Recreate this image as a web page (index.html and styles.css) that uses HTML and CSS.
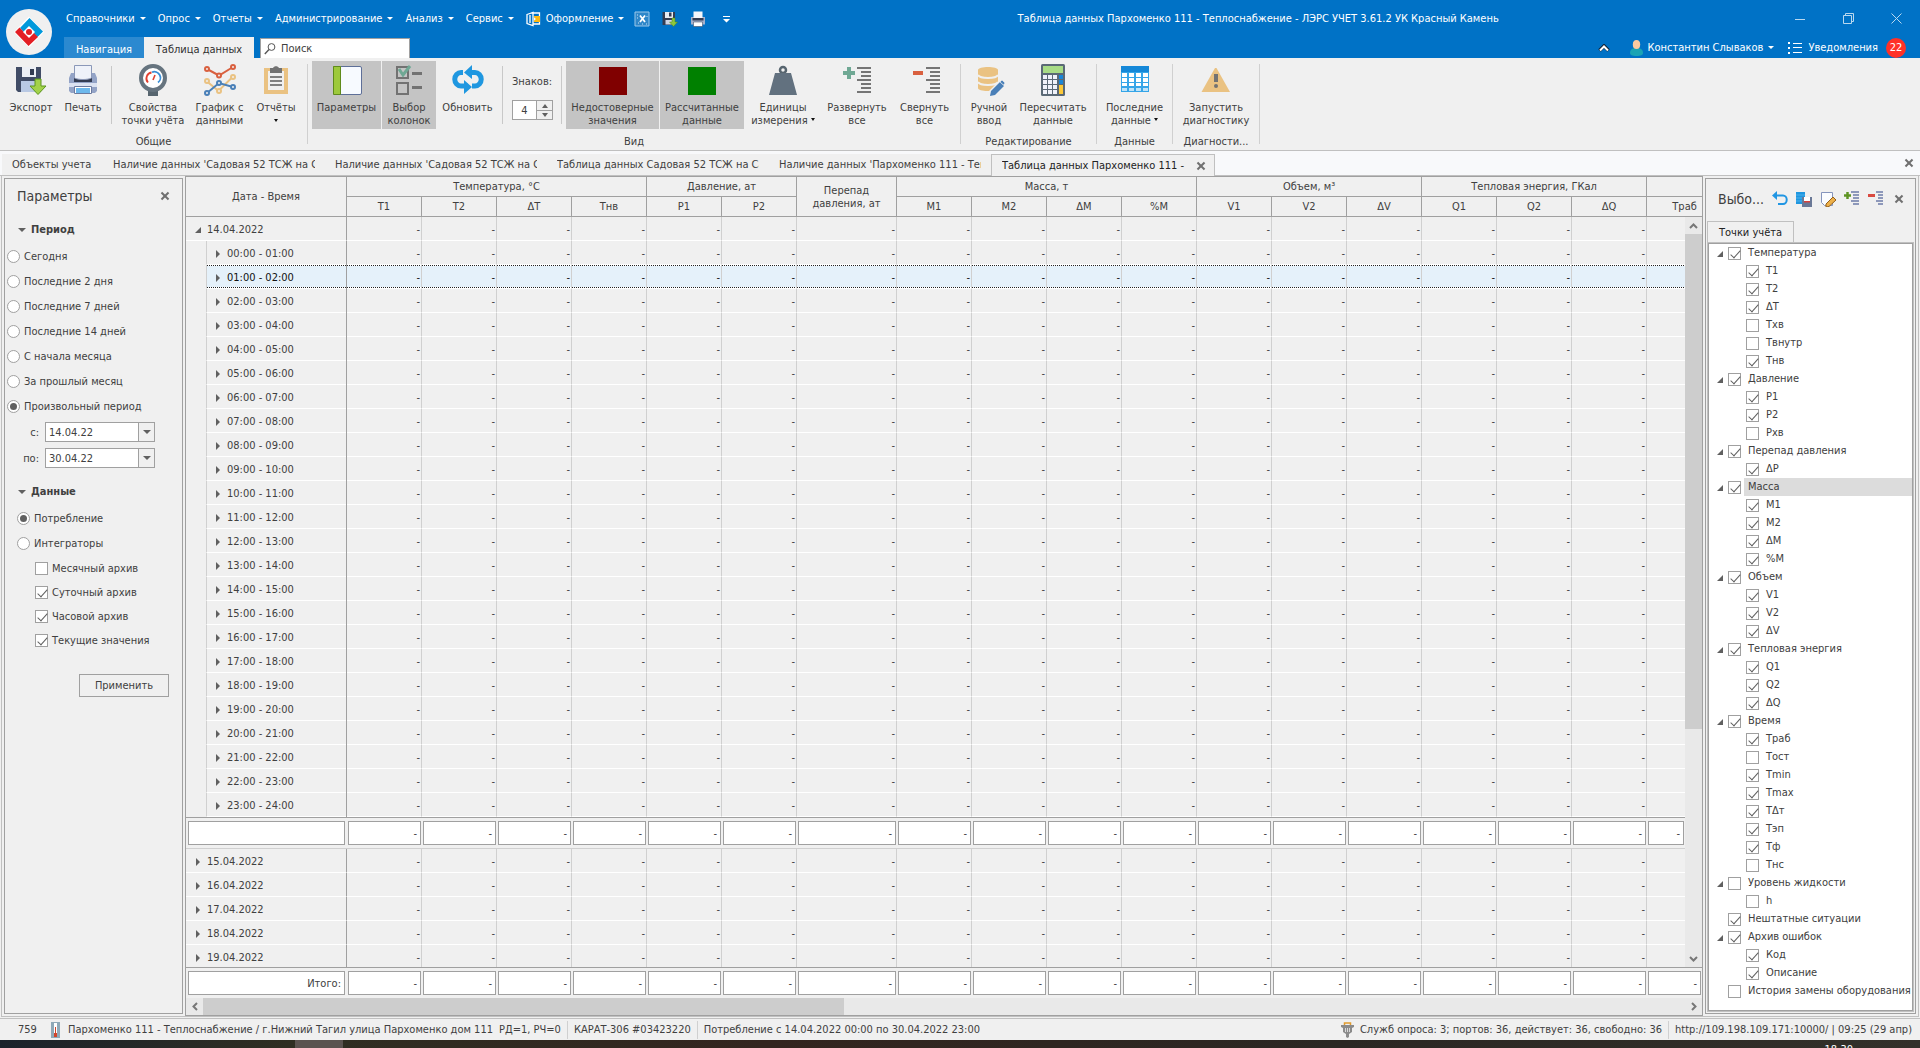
FILE: index.html
```html
<!DOCTYPE html>
<html lang="ru">
<head>
<meta charset="utf-8">
<title>Таблица данных Пархоменко 111 - Теплоснабжение</title>
<link rel="stylesheet" href="styles.css">
</head>
<body>
<header class="top">
  <a class="logo" href="#" aria-label="ЛЭРС УЧЕТ">
    <svg width="46" height="46" viewBox="0 0 46 46"><circle cx="23" cy="23" r="23" fill="#f0f0f0"/><path d="M23 7.500 38 23 23 38.500 8 23z" fill="#fff"/><path d="M23.500 9 37 22.500 31.500 28 23.500 20 19 24.500 14 19z" fill="#0099db"/><path d="M13.500 18.500 19 24 23 28 27.500 23.500 32 28 22.500 37 9 23z" fill="#e31e24"/><path d="M23 17 29 23 23 29 17 23z" fill="#fff"/><circle cx="23" cy="23" r="3" fill="#e31e24"/></svg>
  </a>
  <div class="titlebar">
    <nav class="menu">
      <button class="drop">Справочники</button><button class="drop">Опрос</button><button class="drop">Отчеты</button><button class="drop">Администрирование</button><button class="drop">Анализ</button><button class="drop">Сервис</button>
      <button class="drop theme"><svg width="16" height="16" viewBox="0 0 16 16" fill="none"><path d="M1 3.500 7 1.500v13L1 12.500zM7 2h6.500v11H7M4 4v8" stroke="#fff" stroke-width="1.300"/><path d="M8 5h6v6H8z" fill="#fdb913"/><path d="M8 6.500 10 8 8 9.500z" fill="#fff"/></svg>Оформление</button>
      <button class="quick" aria-label="Очистить"><svg width="16" height="16" viewBox="0 0 16 16" fill="none"><path d="M1 1h14v14H1z" stroke="#9cc8ea" fill="#2f87c9"/><path d="M6 4.500 11 11M11 4.500 6 11" stroke="#fff" stroke-width="1.800"/><path d="M3 4h1M3 7h1M4 12h1M8 13h1M12 13h1M13 5v1" stroke="#cde4f5"/></svg></button>
      <button class="quick" aria-label="Экспорт"><svg width="16" height="16" viewBox="0 0 32 32"><path d="M1 2h25v26H1z" fill="#333c52"/><path d="M6 2h16v12H6z" fill="#e8ebf2"/><path d="M14 3h5v8h-5z" fill="#333c52"/><path d="M7 18h14v9H7z" fill="#cdd5e6"/><path d="M20 14h6v8h5l-8 9-8-9h5z" fill="#8cc63f" stroke="#4d8a16"/></svg></button>
      <button class="quick" aria-label="Печать"><svg width="16" height="16" viewBox="0 0 32 32"><path d="M2 12h28v15H2z" fill="#a4b0cc"/><path d="M7 1h18v13H7z" fill="#f4f6fb"/><path d="M5 14h22v5H5z" fill="#333c52"/><path d="M7 22h18v9H7z" fill="#fff" stroke="#333c52"/></svg></button>
      <button class="quick" aria-label="Настройка панели"><svg width="7" height="8" viewBox="0 0 7 8" fill="#fff"><path d="M0 1h7v1H0zM0 4h7L3.500 7.500z"/></svg></button>
    </nav>
    <h1 class="wintitle">Таблица данных Пархоменко 111 - Теплоснабжение - ЛЭРС УЧЕТ 3.61.2 УК Красный Камень</h1>
    <div class="wincontrols">
      <button aria-label="Свернуть"><svg width="10" height="10"><path d="M0 5.500h10" stroke="#b9d8ef"/></svg></button>
      <button aria-label="Восстановить"><svg width="11" height="11" fill="none" stroke="#b9d8ef"><path d="M.5 2.500h8v8h-8zM2.500 2.500v-2h8v8h-2"/></svg></button>
      <button aria-label="Закрыть"><svg width="11" height="11" stroke="#b9d8ef"><path d="M.5.5l10 10M10.500.5l-10 10"/></svg></button>
    </div>
  </div>
  <div class="tabrow">
    <button class="rtab nav">Навигация</button><button class="rtab active">Таблица данных</button>
    <label class="search"><svg width="12" height="12" viewBox="0 0 12 12" fill="none" stroke="#555"><circle cx="7.500" cy="4" r="3.400"/><path d="M5 6.500.8 11" stroke-width="1.400"/></svg><input type="text" value="Поиск" aria-label="Поиск"></label>
    <div class="user">
      <button class="fold" aria-label="Свернуть ленту"><svg width="12" height="8" viewBox="0 0 12 8" fill="none"><path d="M1.500 6.500 6 2l4.500 4.500" stroke="#123" stroke-width="3.500"/><path d="M2 6.500 6 2.500l4 4" stroke="#fff" stroke-width="2"/></svg></button>
      <button class="drop who"><svg width="13" height="16" viewBox="0 0 13 16"><path d="M0 13c0-4 3-5 6.500-5s6.500 1 6.500 5c0 2-2 3-6.500 3S0 15 0 13z" fill="#1ba4b4"/><ellipse cx="6.500" cy="4.500" rx="3.700" ry="4.500" fill="#fcc9a0"/></svg>Константин Слываков</button>
      <button class="notes"><svg width="14" height="12" viewBox="0 0 14 12" fill="#fff"><path d="M0 0h2v2H0zM0 5h2v2H0zM0 10h2v2H0zM5 1h9v1H5zM5 5h9v1H5zM5 10h9v1H5z"/></svg>Уведомления<span class="badge">22</span></button>
    </div>
  </div>
</header>

<section class="ribbon">
  <div class="group">
    <div class="tools">
      <button class="tool w54"><svg width="32" height="32" viewBox="0 0 32 32"><path d="M1 3h25v25H3l-2-2z" fill="#414c66"/><path d="M7 3h14v10H7z" fill="#eceff5"/><path d="M15 5h4v6h-4z" fill="#333c52"/><path d="M6 17h16v11H6z" fill="#b9c9e4"/><path d="M20 15h6v7h5l-8 8.500L15 22h5z" fill="#a3d24a" stroke="#5c961f"/></svg>Экспорт</button>
      <button class="tool w48"><svg width="32" height="32" viewBox="0 0 32 32"><path d="M4 9h24l2 5v13l-2 2H4l-2-2V14z" fill="#93a3c6"/><path d="M7 14h18v4H7z" fill="#333c52"/><path d="M7.500 1.500h17V14c-4 2-13 2-17 0z" fill="#eff2f9" stroke="#8b98b8"/><path d="M2 19h28v4H2z" fill="#dbe2f1"/><path d="M7.500 22.500h17v7h-17z" fill="#fff" stroke="#6c7a9e"/><path d="M9 24h14v5H9z" fill="#6cb8ec"/></svg>Печать</button>
      <i class="sep"></i>
      <button class="tool w74"><svg width="32" height="32" viewBox="0 0 32 32"><path d="M11 24h10v8H11z" fill="#57656f"/><circle cx="16" cy="14" r="12" fill="#fff" stroke="#66747f" stroke-width="4"/><path d="M11 18.500a6 6 0 0 1 3.500-10" fill="none" stroke="#e2402f" stroke-width="1.800"/><path d="M15 8.200a6 6 0 0 1 6 10.300" fill="none" stroke="#3b8fd6" stroke-width="1.800"/><path d="M18 11l-2 5" stroke="#e2402f" stroke-width="1.600"/></svg><span>Свойства<br>точки учёта</span></button>
      <button class="tool w57"><svg width="34" height="32" viewBox="0 0 34 32" fill="none" stroke-width="2"><g stroke="#eac282"><path d="M4 17.500 15.500 27 29.500 13"/><circle cx="4" cy="17" r="2" fill="#f0f0f0"/><circle cx="16" cy="27" r="2" fill="#f0f0f0"/><circle cx="30" cy="13" r="2" fill="#f0f0f0"/></g><g stroke="#d9603f"><path d="M4 5l12 6.500L30 3"/><circle cx="4" cy="5" r="2" fill="#f0f0f0"/><circle cx="16" cy="11.500" r="2" fill="#f0f0f0"/><circle cx="30" cy="3" r="2" fill="#f0f0f0"/></g><g stroke="#4a80b8"><path d="M4 29l12-10 14 4"/><circle cx="4" cy="29" r="2" fill="#f0f0f0"/><circle cx="16" cy="19" r="2" fill="#f0f0f0"/><circle cx="30" cy="23" r="2" fill="#f0f0f0"/></g></svg><span>График с<br>данными</span></button>
      <button class="tool w54"><svg width="32" height="32" viewBox="0 0 32 32"><path d="M4 4h24v26H4z" fill="#eac282"/><path d="M8 7h16v19H8z" fill="#f0f0f0"/><path d="M10 4h3c1-2.500 5-2.500 6 0h3v5H10z" fill="#727272"/><path d="M10 12h12v2H10zM10 16h12v2H10zM10 20h12v2H10z" fill="#808080"/></svg>Отчёты<span class="caret"></span></button>
    </div>
    <div class="gname">Общие</div>
  </div>
  <div class="group">
    <div class="tools">
      <button class="tool on w69"><svg width="32" height="32" viewBox="0 0 32 32"><rect x="2.500" y="2.500" width="28" height="28" rx="1.500" fill="#f7faff" stroke="#5e6f98"/><path d="M2 2h8v28H2z" fill="#9dc93c"/><path d="M2.500 2.500h7v28h-7z" fill="none" stroke="#5f8a1c"/></svg>Параметры</button>
      <button class="tool on w54"><svg width="32" height="32" viewBox="0 0 32 32"><path d="M4 3h11v11H4zM4 19h11v11H4z" fill="none" stroke="#727272" stroke-width="2"/><path d="M6 5l4 6 7-9" fill="none" stroke="#6fa894" stroke-width="3"/><path d="M19 8h10v3H19zM19 22h10v3H19z" fill="#727272"/></svg><span>Выбор<br>колонок</span></button>
      <button class="tool w61"><svg width="34" height="32" viewBox="0 0 34 32" fill="none" stroke="#1f97e0" stroke-width="5"><path d="M12 8.500H10A6 6.500 0 0 0 10 22h7"/><path d="M21 22h3a6 6.500 0 0 0 0-13.500h-8"/><path d="M21 1v14l-8-6.500zM13 16v14l8-7z" fill="#1f97e0" stroke="none"/></svg>Обновить</button>
      <i class="sep"></i>
      <div class="digits"><label for="digits">Знаков:</label><span class="spin"><input id="digits" type="text" value="4"><span class="updown"><button aria-label="Больше"><i class="tri up"></i></button><button aria-label="Меньше"><i class="tri down"></i></button></span></span></div>
      <i class="sep"></i>
      <button class="tool on w93"><svg width="32" height="32"><path d="M2 3h28v28H2z" fill="#800000"/></svg><span>Недостоверные<br>значения</span></button>
      <button class="tool on w84"><svg width="32" height="32"><path d="M2 3h28v28H2z" fill="#008000"/></svg><span>Рассчитанные<br>данные</span></button>
      <button class="tool w76"><svg width="32" height="32" viewBox="0 0 32 32"><circle cx="16" cy="6" r="3" fill="none" stroke="#57656f" stroke-width="2.500"/><path d="M8 9h16l6 22H2z" fill="#62717f"/></svg><span>Единицы<br>измерения <i class="caret side"></i></span></button>
      <button class="tool w70"><svg width="32" height="32" viewBox="0 0 32 32"><path d="M6 3h4v4h4v4h-4v4H6v-4H2V7h4z" fill="#6fa894"/><path d="M16 3h14v2H16zM20 7h10v2H20zM20 11h10v2H20zM16 15h14v2H16zM20 19h10v2H20zM20 23h10v2H20zM16 27h14v2H16z" fill="#757575"/></svg><span>Развернуть<br>все</span></button>
      <button class="tool w63"><svg width="32" height="32" viewBox="0 0 32 32"><path d="M4 7h10v4H4z" fill="#d9603f"/><path d="M17 3h14v2H17zM21 7h10v2H21zM21 11h10v2H21zM17 15h14v2H17zM21 19h10v2H21zM21 23h10v2H21zM17 27h14v2H17z" fill="#757575"/></svg><span>Свернуть<br>все</span></button>
    </div>
    <div class="gname">Вид</div>
  </div>
  <div class="group">
    <div class="tools">
      <button class="tool w48"><svg width="32" height="32" viewBox="0 0 32 32"><path d="M5 6c0-4 20-4 20 0v18c-2 4-20 4-20 0z" fill="#eac282"/><path d="M5 11c2 4 18 4 20 0M5 18c2 4 18 4 20 0" fill="none" stroke="#f0f0f0" stroke-width="2"/><path d="M16 33v-6l11-11 6 6-11 11z" fill="#f0f0f0"/><path d="M17 32l1-5 9-9 4 4-9 9z" fill="#4a80b8"/><path d="M27 18l2-2 3 3-1.500 2z" fill="#4a80b8" stroke="#f0f0f0" stroke-width=".6"/></svg><span>Ручной<br>ввод</span></button>
      <button class="tool w78"><svg width="32" height="32" viewBox="0 0 32 32"><rect x="4" y="0" width="24" height="32" rx="1.500" fill="#5b6976"/><path d="M6 2h20v7H6z" fill="#a8dc86"/><path d="M6 11h4v4H6zM11 11h4v4h-4zM16 11h4v4h-4zM6 16h4v4H6zM11 16h4v4h-4zM16 16h4v4h-4zM6 21h4v4H6zM11 21h4v4h-4zM16 21h4v4h-4zM6 26h4v4H6zM11 26h4v4h-4zM16 26h4v4h-4z" fill="#f0f2fa"/><path d="M22 11h4v4h-4zM22 16h4v4h-4z" fill="#1a86d8"/><path d="M22 21h4v9h-4z" fill="#fdc938"/></svg><span>Пересчитать<br>данные</span></button>
    </div>
    <div class="gname">Редактирование</div>
  </div>
  <div class="group">
    <div class="tools">
      <button class="tool w67"><svg width="32" height="32" viewBox="0 0 32 32"><path d="M2 2h28v26H2z" fill="#35a5e8"/><path d="M2 2h28v6H2z" fill="#1588d8"/><path d="M3 9h5v4H3zM10 9h5v4h-5zM17 9h5v4h-5zM24 9h5v4h-5zM3 14h5v4H3zM10 14h5v4h-5zM17 14h5v4h-5zM24 14h5v4h-5zM3 19h5v3H3zM10 19h5v3h-5zM17 19h5v3h-5zM24 19h5v3h-5z" fill="#fff"/><path d="M3 24h5v3H3zM10 24h5v3h-5zM17 24h5v3h-5zM24 24h5v3h-5z" fill="#bfe3f8"/></svg><span>Последние<br>данные <i class="caret side"></i></span></button>
    </div>
    <div class="gname">Данные</div>
  </div>
  <div class="group">
    <div class="tools">
      <button class="tool w78"><svg width="32" height="32" viewBox="0 0 32 32"><path d="M15 4h1.500L30 28H1.500z" fill="#eac282"/><path d="M14 10h4v8h-4z" fill="#727272"/><circle cx="16" cy="22" r="2" fill="#727272"/></svg><span>Запустить<br>диагностику</span></button>
    </div>
    <div class="gname">Диагности...</div>
  </div>
</section>

<nav class="doctabs">
  <a class="doc first" href="#"><span>Объекты учета</span></a>
  <a class="doc" href="#"><span>Наличие данных 'Садовая 52 ТСЖ на С</span></a>
  <a class="doc" href="#"><span>Наличие данных 'Садовая 52 ТСЖ на С</span></a>
  <a class="doc" href="#"><span>Таблица данных Садовая 52 ТСЖ на Са</span></a>
  <a class="doc" href="#"><span>Наличие данных 'Пархоменко 111 - Теп</span></a>
  <div class="doc current"><span>Таблица данных Пархоменко 111 - Т</span><button class="x" aria-label="Закрыть вкладку"></button></div>
  <button class="x closeall" aria-label="Закрыть"></button>
</nav>

<main class="work">
  <aside class="panel params">
    <div class="phead"><h2>Параметры</h2><button class="x" aria-label="Закрыть панель"></button></div>
    <h3><i class="tri down"></i>Период</h3>
    <div class="opts">
      <label><input type="radio" name="period">Сегодня</label>
      <label><input type="radio" name="period">Последние 2 дня</label>
      <label><input type="radio" name="period">Последние 7 дней</label>
      <label><input type="radio" name="period">Последние 14 дней</label>
      <label><input type="radio" name="period">С начала месяца</label>
      <label><input type="radio" name="period">За прошлый месяц</label>
      <label><input type="radio" name="period" checked>Произвольный период</label>
    </div>
    <div class="dates">
      <label for="from">с:</label><span class="date"><input id="from" type="text" value="14.04.22"><button aria-label="Выбрать дату начала"><i class="tri down"></i></button></span>
      <label for="to">по:</label><span class="date"><input id="to" type="text" value="30.04.22"><button aria-label="Выбрать дату окончания"><i class="tri down"></i></button></span>
    </div>
    <h3><i class="tri down"></i>Данные</h3>
    <div class="opts inner">
      <label><input type="radio" name="kind" checked>Потребление</label>
      <label><input type="radio" name="kind">Интеграторы</label>
    </div>
    <div class="opts checks">
      <label><input type="checkbox">Месячный архив</label>
      <label><input type="checkbox" checked>Суточный архив</label>
      <label><input type="checkbox" checked>Часовой архив</label>
      <label><input type="checkbox" checked>Текущие значения</label>
    </div>
    <button class="apply">Применить</button>
  </aside>

  <section class="grid">
    <div class="clip">
      <table class="head">
        <thead>
          <tr><th rowspan="2">Дата - Время</th><th colspan="4">Температура, °C</th><th colspan="2">Давление, ат</th><th rowspan="2">Перепад<br>давления, ат</th><th colspan="4">Масса, т</th><th colspan="3">Объем, м³</th><th colspan="3">Тепловая энергия, ГКал</th><th></th></tr>
          <tr><th>T1</th><th>T2</th><th>ΔT</th><th>Tнв</th><th>P1</th><th>P2</th><th>M1</th><th>M2</th><th>ΔM</th><th>%M</th><th>V1</th><th>V2</th><th>ΔV</th><th>Q1</th><th>Q2</th><th>ΔQ</th><th>Tраб</th></tr>
        </thead>
      </table>
    </div>
    <div class="scrollarea">
      <div class="clip"><table class="rows"><tbody id="rows"></tbody></table></div>
      <div class="vbar"><button aria-label="Вверх"><svg width="9" height="6" fill="none" stroke="#777" stroke-width="2"><path d="M1 5l3.500-3.500L8 5"/></svg></button><div class="thumb"></div><button aria-label="Вниз"><svg width="9" height="6" fill="none" stroke="#777" stroke-width="2"><path d="M1 1l3.500 3.500L8 1"/></svg></button></div>
    </div>
    <div class="clip total"><table class="rows"><tbody id="total"></tbody></table></div>
    <div class="hbar"><button aria-label="Влево"><svg width="6" height="9" fill="none" stroke="#777" stroke-width="2"><path d="M5 1L1.500 4.500 5 8"/></svg></button><div class="thumb"></div><button aria-label="Вправо"><svg width="6" height="9" fill="none" stroke="#777" stroke-width="2"><path d="M1 1l3.500 3.500L1 8"/></svg></button></div>
  </section>

  <aside class="panel columns">
    <div class="phead"><h2>Выбо...</h2>
      <button aria-label="Отменить"><svg width="16" height="16" fill="none" stroke="#2196e3" stroke-width="2"><path d="M2 4.500h9a3.500 4 0 0 1 0 8.500H6"/><path d="M5 0v9L0 4.500z" fill="#2196e3" stroke="none"/></svg></button>
      <button aria-label="Сохранить"><svg width="16" height="16"><path d="M0 1h9v12H0z" fill="#1f97e0"/><path d="M0 4h9M0 7h9M0 10h9" stroke="#4fb0ea"/><path d="M6 6h10v10H6z" fill="#6a7896"/><path d="M8 6h6v5H8z" fill="#fff"/><path d="M8 10h6v1.500H8z" fill="#d9403a"/></svg></button>
      <button aria-label="Изменить"><svg width="16" height="16"><path d="M1.500 1.500h11v13h-8l-3-3z" fill="#fafcff" stroke="#8494bd"/><path d="M6 13l7-7 3 3-7 6.500-3 .5z" fill="#edb04a" stroke="#94601a"/></svg></button>
      <button aria-label="Развернуть все"><svg width="16" height="16"><path d="M7 1h8M9 4h6M9 7h6M7 10h8M9 13h6" stroke="#6c7ba8" stroke-width="1.500"/><path d="M3.500 1v7M0 4.500h7" stroke="#5e9423" stroke-width="2.500"/></svg></button>
      <button aria-label="Свернуть все"><svg width="16" height="16"><path d="M8 1h7M10 4h5M10 7h5M8 10h7M10 13h5" stroke="#6c7ba8" stroke-width="1.500"/><path d="M0 4.500h7" stroke="#d94a41" stroke-width="3"/></svg></button>
      <button class="x" aria-label="Закрыть панель"></button></div>
    <button class="ptab">Точки учёта</button>
    <div class="pane"><ul id="tree"></ul></div>
  </aside>
</main>

<footer class="status">
  <span class="num">759</span>
  <svg class="meter" width="9" height="16"><path d="M0 0h9v16H0z" fill="#8fa9b8"/><path d="M3 1h3v14H3z" fill="#fff"/><path d="M4 5h1v6H4zM3 11h3v4H3z" fill="#d0452c"/></svg>
  <span class="place">Пархоменко 111 - Теплоснабжение / г.Нижний Тагил улица Пархоменко дом 111</span>
  <span class="mode">РД=1, РЧ=0</span><i class="bar"></i>
  <span>КАРАТ-306 #03423220</span><i class="bar"></i>
  <span>Потребление с 14.04.2022 00:00 по 30.04.2022 23:00</span>
  <svg class="plug" width="13" height="16"><path d="M3.500 4V1h6v3" fill="none" stroke="#e09a2d" stroke-width="1.500"/><path d="M0 3h13v2l-2 1v4l-3 2v3l-1.500 1L5 15v-3l-3-2V6L0 5z" fill="#8a8a8a"/><path d="M4.500 6v4M6.500 6v4M8.500 6v4" stroke="#d8d8d8"/></svg>
  <span>Служб опроса: 3; портов: 36, действует: 36, свободно: 36</span><i class="bar"></i>
  <span>http://109.198.109.171:10000/ | 09:25 (29 апр)</span>
</footer>
<div class="taskbar"><span class="app"></span><span class="clock">18:30</span></div>
<script src="script.js"></script>
</body>
</html>
```
FILE: styles.css
```css
* { box-sizing: border-box; }
body { margin: 0; height: 100vh; display: flex; flex-direction: column; background: #f0f0f0; color: #404040; font: 11px/13px "DejaVu Sans Condensed", "DejaVu Sans", "Noto Sans", sans-serif; overflow: hidden; }
button, input { font: inherit; color: inherit; border: 0; background: none; padding: 0; margin: 0; border-radius: 0; }
button { white-space: nowrap; }
h1, h2, h3, ul { margin: 0; padding: 0; font: inherit; list-style: none; }
svg { display: block; flex: none; }
a { color: inherit; text-decoration: none; }

.tri { display: block; width: 0; height: 0; border: 4px solid transparent; }
.tri.down { border-top-color: #606060; border-bottom: 0; }
.tri.up { border-bottom-color: #606060; border-top: 0; }
.x { position: relative; width: 10px; height: 10px; flex: none; }
.x::before, .x::after { content: ""; position: absolute; left: 0; top: 4px; width: 10px; height: 2px; background: #707070; transform: rotate(45deg); }
.x::after { transform: rotate(-45deg); }

/* Title bar */
.top { flex: none; display: grid; grid-template: 37px 21px / 64px 1fr; background: #0072c6; color: #fff; }
.logo { grid-row: 1 / 3; padding: 9px 0 0 6px; }
.titlebar { display: flex; align-items: center; min-width: 0; }
.menu { display: flex; align-items: center; }
.drop { display: flex; align-items: center; gap: 4px; }
.drop::after { content: ""; border: 3px solid transparent; border-top-color: #fff; border-bottom: 0; margin-left: 1px; }
.menu .drop { padding: 0 10px 0 2px; }
.menu .theme { padding-right: 4px; }
.quick { width: 28px; display: flex; justify-content: center; }
.wintitle { flex: 1; text-align: center; white-space: nowrap; overflow: hidden; }
.wincontrols { display: flex; }
.wincontrols button { width: 48px; height: 36px; display: flex; align-items: center; justify-content: center; }
.tabrow { display: flex; align-items: stretch; }
.rtab { padding: 3px 0 0; }
.rtab.nav { width: 80px; background: #2b89d0; }
.rtab.active { width: 110px; background: #f0f0f0; color: #303030; }
.search { display: flex; align-items: center; gap: 5px; width: 150px; margin: 1px 0 0 6px; padding: 0 3px; background: #fff; border: 1px solid #a0a0a0; border-bottom: 0; color: #404040; }
.search input { width: 100%; outline: 0; }
.user { margin-left: auto; display: flex; align-items: center; padding-right: 14px; }
.fold { margin-right: 20px; }
.who { margin-right: 14px; }
.notes { display: flex; align-items: center; gap: 6px; }
.badge { width: 20px; height: 20px; line-height: 20px; border-radius: 50%; background: #ff3127; margin-left: 2px; }

/* Ribbon */
.ribbon { flex: none; display: flex; height: 93px; border-bottom: 1px solid #c0c0c0; }
.group { display: flex; flex-direction: column; padding: 3px 5px 0 4px; position: relative; }
.group::after { content: ""; position: absolute; right: 0; top: 6px; width: 1px; height: 80px; background: #d0d0d0; }
.tools { display: flex; height: 74px; gap: 1px; }
.gname { text-align: center; }
.tool { display: flex; flex-direction: column; align-items: center; height: 68px; padding-top: 3px; text-align: center; line-height: 13px; }
.tool svg { margin-bottom: 5px; }
.tool.on { background: #c4c4c4; }
.w48 { width: 48px; } .w54 { width: 54px; } .w57 { width: 57px; } .w61 { width: 61px; } .w63 { width: 63px; } .w67 { width: 67px; } .w69 { width: 69px; } .w70 { width: 70px; } .w74 { width: 74px; } .w76 { width: 76px; } .w78 { width: 78px; } .w84 { width: 84px; } .w93 { width: 93px; }
.sep { width: 1px; height: 58px; margin: 5px 3px 0; background: #c8c8c8; }
.caret { display: block; border: 2px solid transparent; border-top: 3px solid #111; border-bottom: 0; margin-top: 5px; }
.caret.side { display: inline-block; margin: 0 0 3px; }
.digits { width: 50px; padding: 14px 0 0 5px; display: flex; flex-direction: column; gap: 12px; }
.spin { display: flex; width: 41px; height: 20px; border: 1px solid #a0a0a0; background: #fff; }
.spin input { width: 23px; text-align: center; }
.updown { display: flex; flex-direction: column; border-left: 1px solid #a0a0a0; background: #f0f0f0; }
.updown button { width: 15px; height: 9px; display: flex; align-items: center; justify-content: center; }
.updown .tri { border-width: 3px; }
.updown .up { border-top: 0; border-bottom-width: 4px; }
.updown .down { border-bottom: 0; border-top-width: 4px; }
.updown button + button { border-top: 1px solid #a0a0a0; }

/* Document tabs */
.doctabs { flex: none; display: flex; height: 25px; padding: 3px 5px 0 2px; background: #f8f9fb; border-bottom: 1px solid #c0c0c0; }
.doc { display: flex; align-items: center; width: 222px; padding: 0 10px; background: #f0f0f0; }
.doc span { flex: 1; white-space: nowrap; overflow: hidden; }
.doc.first { width: 101px; padding-right: 0; }
.doc.current { width: 224px; height: 22px; border: 1px solid #c0c0c0; border-bottom: 0; padding: 0 8px 0 10px; gap: 10px; color: #222; }
.closeall { margin: 4px 1px 0 auto; }

/* Work area */
.work { flex: 1; min-height: 0; display: flex; gap: 2px; margin: 0 1px 1px; padding: 0 2px; border: 1px solid #c0c0c0; border-top: 0; }
.panel { flex: none; margin: 2px 0; border: 1px solid #a0a0a0; }
.params { width: 179px; }
.phead { display: flex; align-items: center; }
.phead h2 { font-size: 14px; line-height: 18px; }
.params .phead { height: 36px; padding: 0 12px 2px; justify-content: space-between; }
.panel h3 { display: flex; align-items: center; gap: 5px; height: 29px; padding-left: 13px; font-weight: bold; }
.opts { display: flex; flex-direction: column; padding-left: 2px; }
.opts label { display: flex; align-items: center; gap: 4px; height: 25px; }
.opts.inner { padding-left: 12px; }
.opts.checks { padding-left: 30px; }
.opts.checks label { height: 24px; }
input[type=radio], input[type=checkbox] { appearance: none; flex: none; width: 13px; height: 13px; border: 1px solid #a0a0a0; background: #fff; position: relative; }
input[type=radio] { border-radius: 50%; }
input[type=radio]:checked::after { content: ""; position: absolute; inset: 2px; border-radius: 50%; background: #606060; }
input[type=checkbox]:checked::after { content: ""; position: absolute; left: 4px; top: 0; width: 4px; height: 9px; border: solid #606060; border-width: 0 1px 1px 0; transform: rotate(42deg); }
.dates { display: grid; grid-template-columns: 34px 110px; column-gap: 6px; row-gap: 6px; align-items: center; padding: 3px 0 9px; }
.dates label { text-align: right; }
.date { display: flex; height: 20px; border: 1px solid #a0a0a0; background: #fff; }
.date input { flex: 1; min-width: 0; padding-left: 3px; }
.date button { width: 16px; display: flex; align-items: center; justify-content: center; border-left: 1px solid #a0a0a0; background: #f0f0f0; }
.apply { display: block; width: 90px; height: 23px; margin: 22px 0 0 74px; border: 1px solid #a0a0a0; }

/* Data grid */
.grid { flex: 1; min-width: 0; display: flex; flex-direction: column; border: 1px solid #a0a0a0; }
.clip { flex: none; overflow: hidden; }
table { width: 1536px; table-layout: fixed; border-collapse: separate; border-spacing: 0; }
th { font-weight: normal; height: 20px; padding: 0; border: solid #a0a0a0; border-width: 0 1px 1px 0; }
th:last-child { border-right: 0; }
.scrollarea { flex: 1; min-height: 0; display: flex; overflow: hidden; }
.scrollarea .clip { flex: 1; min-width: 0; }
td { height: 24px; padding: 2px 1px 0 0; text-align: right; border: solid #d0d0d0; border-width: 0 1px 1px 0; border-bottom-color: #fff; }
td:first-child { padding: 0; border-right-color: #a0a0a0; text-align: left; }
.cell { display: flex; align-items: center; gap: 6px; height: 23px; padding: 2px 0 0 9px; }
.child td:first-child { border-bottom: 0; }
.child .cell { height: 24px; margin-left: 20px; padding-left: 8px; border-left: 1px solid #d0d0d0; border-bottom: 1px solid #fff; }
.closed { margin: 0 1px; border: 4px solid transparent; border-left-color: #606060; border-right: 0; }
.open { border: 3px solid transparent; border-right-color: #606060; border-bottom-color: #606060; }
.selected td:not(:first-child), .selected .cell { color: #111; background: repeating-linear-gradient(90deg, #222 0 1px, #fff 1px 2px) top / 100% 1px no-repeat padding-box, repeating-linear-gradient(90deg, #222 0 1px, #fff 1px 2px) bottom / 100% 1px no-repeat padding-box, #e5f1fa padding-box; }
.sum td { height: 32px; padding: 0; border-right: 0; border-top: 1px solid #a0a0a0; border-bottom-color: #d0d0d0; }
.sum td div { height: 24px; line-height: 23px; margin: 0 1px; padding-right: 3px; background: #fff; border: 1px solid #a0a0a0; text-align: right; }
.sum td:first-child div { margin: 0 2px; }
.sum td:last-child div { width: 36px; }
.total { border-top: 1px solid #a0a0a0; }
.total .sum td { height: 30px; border: 0; }
.total .sum td:last-child div { width: 53px; }
.vbar { flex: none; width: 17px; display: flex; flex-direction: column; background: #e9e9e9; }
.vbar button { height: 17px; display: flex; align-items: center; justify-content: center; flex: none; }
.vbar .thumb { height: 66%; background: #cdcdcd; margin-bottom: auto; }
.hbar { flex: none; display: flex; height: 17px; background: #e9e9e9; }
.hbar button { width: 17px; display: flex; align-items: center; justify-content: center; }
.hbar .thumb { width: 42.3%; background: #cdcdcd; margin-right: auto; }

/* Column chooser */
.columns { width: 211px; display: flex; flex-direction: column; }
.columns .phead { height: 42px; padding: 0 12px 3px; gap: 8px; }
.columns .phead h2 { width: 47px; }
.columns .phead .x { margin-left: 2px; }
.ptab { width: 87px; height: 22px; margin-left: 1px; border: 1px solid #c0c0c0; border-bottom: 0; color: #222; flex: none; }
.pane { flex: 1; min-height: 0; margin: -1px 1px 1px; border: 1px solid #c0c0c0; }
.pane ul { height: 100%; overflow: hidden; background: #fff; border: 1px solid #a0a0a0; }
.pane label { display: flex; align-items: center; height: 18px; padding-left: 37px; white-space: nowrap; }
.pane label span { padding-left: 4px; margin-left: 3px; flex: 1; line-height: 18px; }
.pane .parent label, .pane .leaf label { padding-left: 19px; }
.pane li { display: block; position: relative; }
.pane .parent .open { position: absolute; left: 8px; top: 7px; }
.pane .hot span { background: #dcdcdc; }

/* Status bar */
.status { flex: none; display: flex; align-items: center; gap: 6px; height: 22px; padding: 0 8px 0 18px; border-top: 1px solid #c0c0c0; white-space: nowrap; }
.num { width: 27px; }
.meter { margin-right: 2px; }
.status .bar { width: 1px; height: 18px; background: #d0d0d0; }
.plug { margin-left: auto; }
.taskbar { flex: none; display: flex; align-items: flex-start; height: 8px; overflow: hidden; background: linear-gradient(90deg, #1b222b, #2f2e22 15%, #33251f 40%, #2b2723 70%, #33302a); }
.app { width: 48px; height: 8px; margin-left: 295px; background: #5b5350; }
.clock { margin: 3px 67px 0 auto; color: #fff; }
```
FILE: script.js
```js
const COLUMNS = 18;
const rows = document.getElementById('rows');

function valueCells(wrap) {
  return (wrap ? '<td><div>-</div></td>' : '<td>-</td>').repeat(COLUMNS - 1) + (wrap ? '<td><div>-</div></td>' : '<td></td>');
}
function dateRow(text, open) {
  return `<tr><td><div class="cell"><i class="${open ? 'open' : 'closed'}"></i><span>${text}</span></div></td>${valueCells()}</tr>`;
}
const pad = n => String(n).padStart(2, '0');

let html = dateRow('14.04.2022', true);
for (let h = 0; h < 24; h++) {
  html += `<tr class="child${h === 1 ? ' selected' : ''}"><td><div class="cell"><i class="closed"></i><span>${pad(h)}:00 - ${pad(h + 1)}:00</span></div></td>${valueCells()}</tr>`;
}
html += `<tr class="sum"><td><div></div></td>${valueCells(true)}</tr>`;
for (let d = 15; d < 20; d++) html += dateRow(`${d}.04.2022`, false);
rows.innerHTML = html;
document.getElementById('total').innerHTML = `<tr class="sum"><td><div>Итого:</div></td>${valueCells(true)}</tr>`;

// Column widths shared by the three tables
const cols = [161, 75, 75, 75, 75, 75, 75, 100, ...Array(11).fill(75)];
document.querySelectorAll('table').forEach(t =>
  t.insertAdjacentHTML('afterbegin', '<colgroup>' + cols.map(w => `<col style="width:${w}px">`).join('') + '</colgroup>'));

// "-" marks an unticked item
const tree = [
  ['Температура', 'T1', 'T2', 'ΔT', '-Tхв', '-Tвнутр', 'Tнв'],
  ['Давление', 'P1', 'P2', '-Pхв'],
  ['Перепад давления', 'ΔP'],
  ['Масса', 'M1', 'M2', 'ΔM', '%M'],
  ['Объем', 'V1', 'V2', 'ΔV'],
  ['Тепловая энергия', 'Q1', 'Q2', 'ΔQ'],
  ['Время', 'Tраб', '-Tост', 'Tmin', 'Tmax', 'TΔт', 'Tэп', 'Tф', '-Tнс'],
  ['-Уровень жидкости', '-h'],
  ['Нештатные ситуации'],
  ['Архив ошибок', 'Код', 'Описание'],
  ['-История замены оборудования']
];
const item = (t, cls) => `<li class="${cls}">${cls.startsWith('parent') ? '<i class="open"></i>' : ''}<label><input type="checkbox"${t[0] === '-' ? '' : ' checked'}><span>${t.replace(/^-/, '')}</span></label></li>`;
document.getElementById('tree').innerHTML = tree.map(([p, ...kids]) =>
  item(p, (kids.length ? 'parent' : 'leaf') + (p === 'Масса' ? ' hot' : '')) + kids.map(k => item(k, 'kid')).join('')).join('');
```
